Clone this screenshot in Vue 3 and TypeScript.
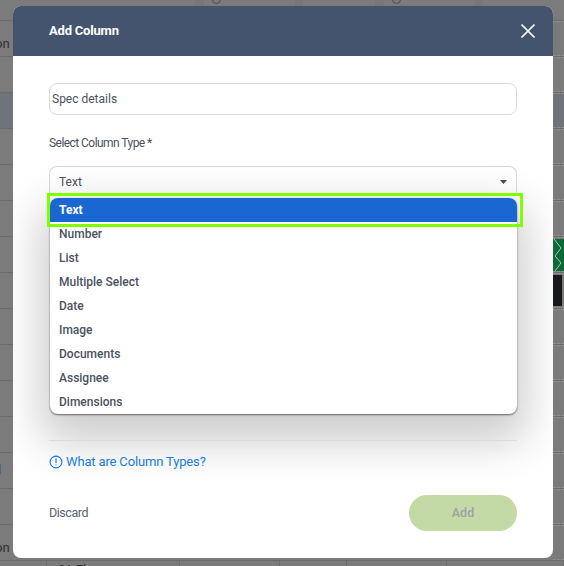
<script setup lang="ts">
const options = ['Text', 'Number', 'List', 'Multiple Select', 'Date', 'Image', 'Documents', 'Assignee', 'Dimensions']

// rows of the table behind the overlay; only their edges stay visible
const rows = [
  { left: 'on', tint: false, cell: '' },
  { left: '', tint: false, cell: '' },
  { left: '', tint: true, cell: '' },
  { left: '', tint: false, cell: '' },
  { left: '', tint: false, cell: '' },
  { left: '', tint: false, cell: '' },
  { left: '', tint: false, cell: 'green' },
  { left: '', tint: false, cell: 'black' },
  { left: '', tint: false, cell: '' },
  { left: '', tint: false, cell: '' },
  { left: '', tint: false, cell: '' },
  { left: '', tint: false, cell: '' },
  { left: 'l', tint: false, cell: '' },
  { left: '', tint: false, cell: '' },
  { left: 'on', tint: false, cell: '' }
]
</script>

<template>
  <div class="page">
    <div class="table">
      <div class="table-top">
        <span class="top-cell"></span>
        <span class="top-bar"></span>
        <span class="top-cell"><i class="ring"></i></span>
        <span class="top-bar"></span>
        <span class="top-cell"></span>
        <span class="top-bar"></span>
        <span class="top-cell"><i class="ring"></i></span>
        <span class="top-bar"></span>
        <span class="top-cell"></span>
      </div>
      <div v-for="(row, index) in rows" :key="index" class="row" :class="{ 'row--tint': row.tint }">
        <span class="row-left" :class="{ 'row-left--link': row.left === 'l' }">{{ row.left }}</span>
        <span class="row-right">
          <svg v-if="row.cell === 'green'" class="swatch swatch--green" width="11" height="32" viewBox="0 0 11 32" fill="none">
            <path d="M1 0 8 9 2 17 8 24 2 32" stroke="#a9c4b2" stroke-width="1" />
          </svg>
          <i v-else-if="row.cell" class="swatch swatch--black"></i>
        </span>
      </div>
      <div class="table-bottom">
        <span class="bottom-cell"></span>
        <span class="bottom-cell bottom-cell--floor">01 Floor</span>
        <span class="bottom-cell"></span>
        <span class="bottom-cell"></span>
        <span class="bottom-cell"></span>
        <span class="bottom-cell"></span>
      </div>
    </div>

    <div class="modal">
      <header class="modal-head">
        <h1 class="modal-title">Add Column</h1>
        <svg class="close" width="16" height="16" viewBox="0 0 16 16" fill="none">
          <path d="M1.5 1.5 14.5 14.5M14.5 1.5 1.5 14.5" stroke="#fff" stroke-width="1.7" />
        </svg>
      </header>

      <div class="modal-body">
        <div class="field">Spec details</div>
        <div class="label">Select Column Type *</div>

        <div class="select-wrap">
          <div class="select">
            <span>Text</span>
            <svg class="caret" width="7" height="4" viewBox="0 0 7 4">
              <path d="M0 0h7L3.5 4z" fill="#434b59" />
            </svg>
          </div>
          <ul class="menu">
            <li v-for="(option, index) in options" :key="option" class="option" :class="{ 'option--active': index === 0 }">
              {{ option }}
            </li>
          </ul>
          <div class="highlight"></div>
        </div>

        <div class="divider"></div>

        <a class="help">
          <svg width="14" height="14" viewBox="0 0 14 14" fill="none">
            <circle cx="7" cy="7" r="5.9" stroke="#1a7be0" stroke-width="1.1" />
            <path d="M7 3.6v4.3M7 9.4v1.1" stroke="#1a7be0" stroke-width="1.2" />
          </svg>
          What are Column Types?
        </a>

        <footer class="actions">
          <span class="discard">Discard</span>
          <span class="add">Add</span>
        </footer>
      </div>
    </div>
  </div>
</template>

<style scoped>
.page {
  position: relative;
  width: 564px;
  height: 566px;
  overflow: hidden;
  background: #7b7b7b;
  font-family: Roboto, "Liberation Sans", sans-serif;
}

.table {
  display: flex;
  flex-direction: column;
}

.table-top {
  display: grid;
  grid-template-columns: 194px 10px 91px 8px 72px 9px 91px 7px 1fr;
  height: 21px;
  border-bottom: 1px solid #6c6c6c;
  box-sizing: border-box;
}

.top-bar {
  background: #777;
}

.ring {
  display: block;
  width: 9px;
  height: 9px;
  margin: -5px 0 0 8px;
  border: 1px solid #4e4e4e;
  border-radius: 50%;
  box-sizing: border-box;
}

.row {
  display: flex;
  justify-content: space-between;
  height: 36px;
  border-bottom: 1px solid #6c6c6c;
  box-sizing: border-box;
}

.row--tint {
  background: #70747a;
}

.row-left {
  margin-left: -5px;
  padding-top: 16px;
  font-size: 13px;
  line-height: 14px;
  color: #2e2e2e;
}

.row-left--link {
  margin-left: -2px;
  padding-top: 10px;
  color: #1c3470;
}

.row-right {
  display: flex;
  width: 11px;
  padding: 1px 0;
  border-top: 1px dashed #8e8e8e;
  border-bottom: 1px dashed #8e8e8e;
  box-sizing: border-box;
}

.swatch {
  display: block;
}

.swatch--green {
  background: #0b6a38;
}

.swatch--black {
  width: 9px;
  height: 31px;
  background: #16181c;
}

.table-bottom {
  display: grid;
  grid-template-columns: 47px 133px 100px 67px 100px 1fr;
}

.bottom-cell {
  height: 20px;
  border-right: 1px solid #6c6c6c;
}

.bottom-cell--floor {
  padding: 1px 0 0 11px;
  font-size: 13px;
  line-height: 15px;
  color: #2e2e2e;
}

.modal {
  position: absolute;
  top: 6px;
  left: 13px;
  width: 540px;
  height: 552px;
  overflow: hidden;
  border-radius: 8px;
  background: #fff;
}

.modal-head {
  display: flex;
  align-items: center;
  justify-content: space-between;
  height: 50px;
  padding: 0 17px 0 36px;
  background: #44546f;
}

.modal-title {
  margin: -2px 0 0;
  font-size: 13px;
  font-weight: 700;
  letter-spacing: -0.2px;
  color: #fff;
}

.close {
  margin-top: -1px;
}

.modal-body {
  display: flex;
  flex-direction: column;
  padding: 27px 36px 0;
  color: #4a5260;
}

.field {
  height: 32px;
  padding-left: 2px;
  border: 1px solid #d8d8de;
  border-radius: 8px;
  font-size: 12px;
  line-height: 30px;
  box-sizing: border-box;
}

.label {
  margin-top: 20px;
  font-size: 12px;
  line-height: 16px;
  letter-spacing: -0.55px;
}

.select-wrap {
  position: relative;
  margin-top: 15px;
  height: 274px;
}

.select {
  display: flex;
  align-items: center;
  justify-content: space-between;
  height: 30px;
  padding: 0 9px;
  border: 1px solid #d8d8de;
  border-bottom: 0;
  border-radius: 8px 8px 0 0;
  font-size: 12px;
  box-sizing: border-box;
}

.menu {
  position: absolute;
  top: 32px;
  left: 1px;
  width: 467px;
  margin: 0;
  padding: 0;
  list-style: none;
  border-radius: 8px;
  background: #fff;
  box-shadow: 0 18px 44px 10px rgba(0, 0, 0, 0.2), 0 1px 2px rgba(0, 0, 0, 0.55);
}

.option {
  height: 24px;
  padding-left: 9px;
  font-size: 12px;
  font-weight: 500;
  line-height: 24px;
  color: #4a5260;
}

.option--active {
  border-radius: 8px 8px 0 0;
  background: #1a67d2;
  font-weight: 700;
  color: #fff;
}

.highlight {
  position: absolute;
  top: 27px;
  left: -2px;
  width: 476px;
  height: 34px;
  border: 3px solid #7fff00;
  box-sizing: border-box;
}

.divider {
  position: relative;
  height: 1px;
  background: #dcdcdc;
}

.help {
  position: relative;
  display: flex;
  align-items: center;
  gap: 3px;
  margin-top: 13px;
  font-size: 13px;
  line-height: 16px;
  letter-spacing: -0.15px;
  color: #1a7be0;
}

.actions {
  position: relative;
  display: flex;
  align-items: center;
  justify-content: space-between;
  margin-top: 25px;
}

.discard {
  margin-top: -2px;
  font-size: 12.5px;
  letter-spacing: -0.45px;
  color: #5a6270;
}

.add {
  width: 108px;
  height: 36px;
  border-radius: 18px;
  background: #c3d9a6;
  font-size: 12.5px;
  font-weight: 500;
  line-height: 36px;
  text-align: center;
  color: #9da3a3;
}
</style>
